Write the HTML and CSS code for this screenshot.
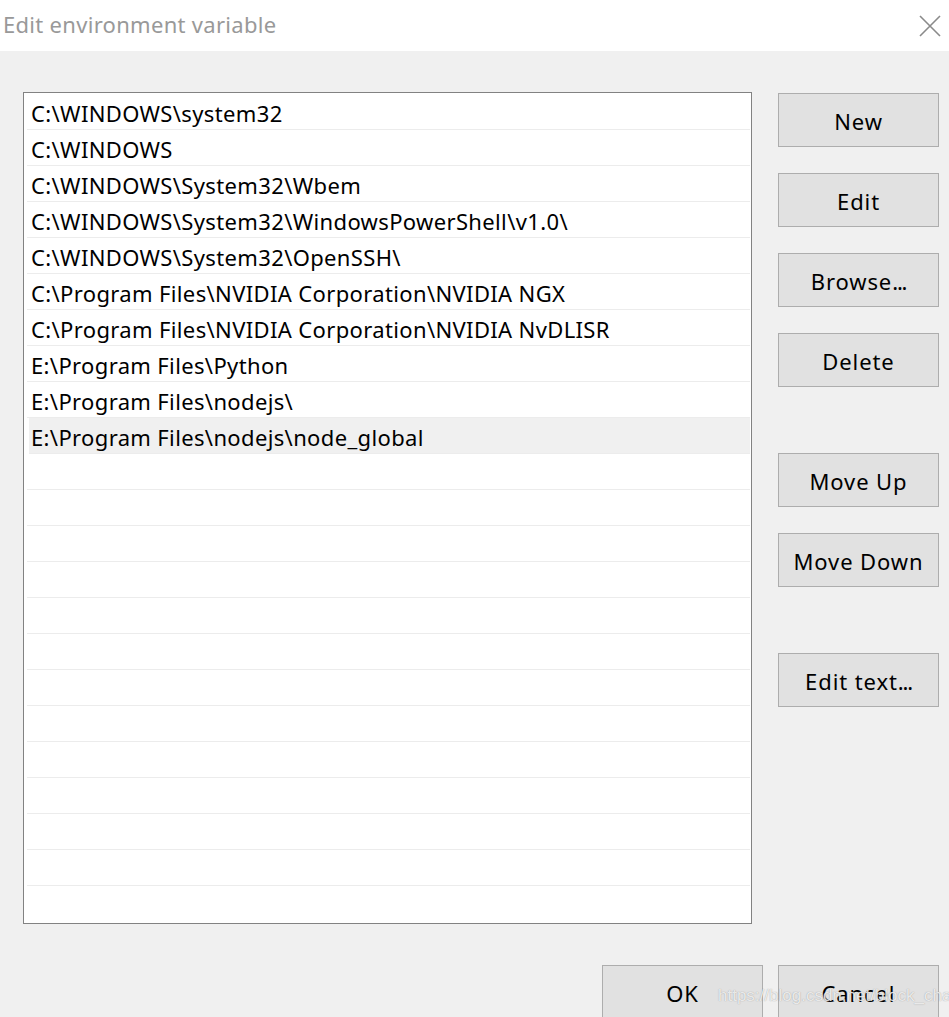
FILE: index.html
```html
<!DOCTYPE html>
<html>
<head>
<meta charset="utf-8">
<link rel="stylesheet" href="styles.css">
</head>
<body>
<div class="dialog">
  <div class="titlebar">
    <span class="title">Edit environment variable</span>
    <svg class="close" width="22" height="22" viewBox="0 0 22 22"><path d="M1 1 L21 21 M21 1 L1 21" stroke="#8a8a8a" stroke-width="1.6" fill="none"/></svg>
  </div>
  <div class="body">
    <div class="main">
      <div class="list">
        <div class="row">C:\WINDOWS\system32</div>
        <div class="row">C:\WINDOWS</div>
        <div class="row">C:\WINDOWS\System32\Wbem</div>
        <div class="row">C:\WINDOWS\System32\WindowsPowerShell\v1.0\</div>
        <div class="row">C:\WINDOWS\System32\OpenSSH\</div>
        <div class="row">C:\Program Files\NVIDIA Corporation\NVIDIA NGX</div>
        <div class="row">C:\Program Files\NVIDIA Corporation\NVIDIA NvDLISR</div>
        <div class="row">E:\Program Files\Python</div>
        <div class="row">E:\Program Files\nodejs\</div>
        <div class="row selected">E:\Program Files\nodejs\node_global</div>
        <div class="row"></div><div class="row"></div><div class="row"></div>
        <div class="row"></div><div class="row"></div><div class="row"></div>
        <div class="row"></div><div class="row"></div><div class="row"></div>
        <div class="row"></div><div class="row"></div><div class="row"></div>
        <div class="row last"></div>
      </div>
      <div class="buttons">
        <div class="btn">New</div>
        <div class="btn">Edit</div>
        <div class="btn">Browse<span class="dots">...</span></div>
        <div class="btn">Delete</div>
        <div class="btn gap">Move Up</div>
        <div class="btn">Move Down</div>
        <div class="btn gap">Edit text<span class="dots">...</span></div>
      </div>
    </div>
    <div class="footer">
      <div class="btn">OK</div>
      <div class="btn">Cancel</div>
      <span class="watermark">https://blog.csdn.net/block_chain</span>
    </div>
  </div>
</div>
</body>
</html>
```
FILE: styles.css
```css
html, body {
  margin: 0;
  padding: 0;
}
body {
  width: 949px;
  height: 1017px;
  overflow: hidden;
  background: #f0f0f0;
  font-family: "Noto Sans", "Open Sans", sans-serif;
  color: #000;
}
.titlebar {
  height: 51px;
  background: #fff;
  display: flex;
  align-items: center;
  justify-content: space-between;
  box-sizing: border-box;
  padding: 0 8px 4px 3px;
}
.title {
  font-size: 22px;
  color: #999;
  letter-spacing: 0.3px;
}
.close {
  margin-top: 4px;
}
.body {
  padding: 41px 10px 0 23px;
}
.main {
  display: flex;
  gap: 26px;
}
.list {
  width: 726px;
  height: 829px;
  border: 1px solid #828282;
  background: #fff;
  padding: 1px 1px 0 2px;
  display: flex;
  flex-direction: column;
}
.row {
  height: 35px;
  border-bottom: 1px solid #ececec;
  font-size: 22px;
  line-height: 39px;
  padding-left: 4px;
  margin-left: 1px;
  white-space: nowrap;
  letter-spacing: 0.36px;
  flex: none;
}
.row.selected {
  background: #f0f0f0;
  margin-left: 3px;
  padding-left: 2px;
}
.row.last {
  border-bottom: none;
}
.buttons {
  display: flex;
  flex-direction: column;
  gap: 26px;
  padding-top: 1px;
}
.btn {
  width: 159px;
  background: #e1e1e1;
  border: 1px solid #adadad;
  display: flex;
  align-items: center;
  justify-content: center;
  font-size: 22px;
  letter-spacing: 0.9px;
  padding-top: 2px;
  box-sizing: content-box;
  height: 50px;
  flex: none;
}
.dots {
  letter-spacing: -1.2px;
}
.btn.gap {
  margin-top: 40px;
}
.footer {
  position: relative;
  display: flex;
  justify-content: flex-end;
  gap: 15px;
  padding-top: 41px;
}
.footer .btn {
  width: 161px;
  align-items: flex-start;
  padding-top: 12px;
  box-sizing: border-box;
  height: 60px;
}
.watermark {
  position: absolute;
  left: 695px;
  top: 62px;
  font-family: "Liberation Sans", Arial, sans-serif;
  font-size: 17px;
  color: rgba(255, 255, 255, 0.8);
  text-shadow: 0 0 1px rgba(110,110,110,0.7);
  pointer-events: none;
}
```
